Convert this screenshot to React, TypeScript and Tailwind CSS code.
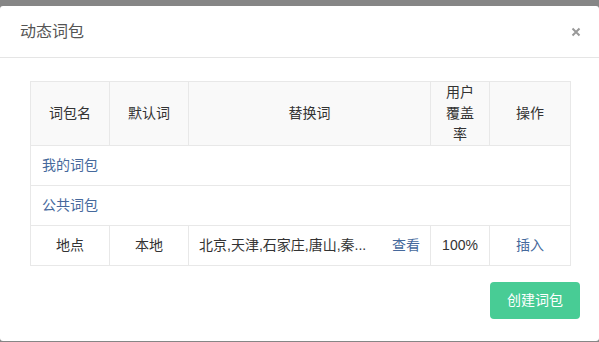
import React from 'react';

const font = { fontFamily: '"Liberation Sans", "Noto Sans CJK SC", sans-serif' };

export default function App() {
    const th = "border border-[#e8e8e8] bg-[#f9f9f9] font-normal text-[14px] text-[#333] text-center align-middle";
    const td = "border border-[#e8e8e8] text-[14px] text-[#333] align-middle h-[40px]";
    return (
        <div className="w-[599px] h-[342px] bg-[#868686] pt-[6px] overflow-hidden" style={font}>
            <div className="bg-white rounded-[3px] h-[335px] flex flex-col">
                <div className="h-[52px] flex items-center justify-between pl-[20px] pr-[18px] border-b border-[#e5e5e5]">
                    <h1 className="text-[16px] text-[#555] font-normal">动态词包</h1>
                    <button className="w-[10px] h-[10px] flex items-center justify-center">
                        <svg width="10" height="10" viewBox="0 0 10 10">
                            <path d="M1.5 1.5 L8.5 8.5 M8.5 1.5 L1.5 8.5" stroke="#999" strokeWidth="2" />
                        </svg>
                    </button>
                </div>

                <div className="px-[30px] pt-[23px]">
                    <table className="w-[540px] border-collapse table-fixed">
                        <colgroup>
                            <col className="w-[79px]" />
                            <col className="w-[79px]" />
                            <col className="w-[242px]" />
                            <col className="w-[59px]" />
                            <col className="w-[81px]" />
                        </colgroup>
                        <thead>
                            <tr className="h-[64px]">
                                <th className={th}>词包名</th>
                                <th className={th}>默认词</th>
                                <th className={th}>替换词</th>
                                <th className={th + " leading-[21px] px-[12px]"}>用户覆盖率</th>
                                <th className={th}>操作</th>
                            </tr>
                        </thead>
                        <tbody>
                            <tr>
                                <td colSpan={5} className={td + " pl-[11px] text-[#46699c]"}>我的词包</td>
                            </tr>
                            <tr>
                                <td colSpan={5} className={td + " pl-[11px] text-[#46699c]"}>公共词包</td>
                            </tr>
                            <tr>
                                <td className={td + " text-center"}>地点</td>
                                <td className={td + " text-center"}>本地</td>
                                <td className={td + " px-[10px]"}>
                                    <div className="flex items-center justify-between">
                                        <span>北京,天津,石家庄,唐山,秦...</span>
                                        <a href="#" className="text-[#46699c]">查看</a>
                                    </div>
                                </td>
                                <td className={td + " text-center"}>100%</td>
                                <td className={td + " text-center text-[#46699c]"}>插入</td>
                            </tr>
                        </tbody>
                    </table>
                </div>

                <div className="flex justify-end pr-[19px] pt-[16px]">
                    <button className="w-[90px] h-[37px] rounded-[4px] bg-[#48cc95] text-white text-[14px]">创建词包</button>
                </div>
            </div>
        </div>
    );
}
